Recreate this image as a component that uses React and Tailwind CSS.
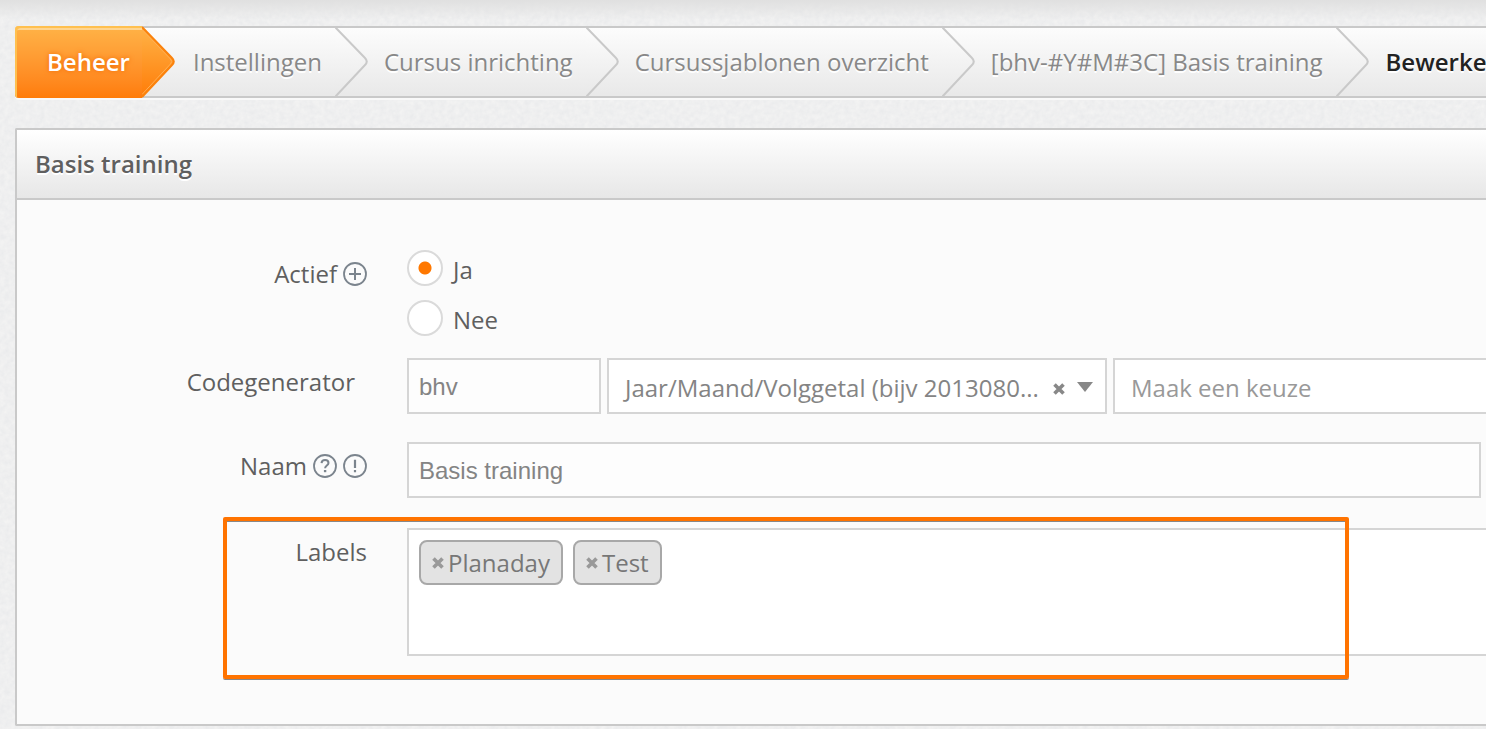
import { useState } from 'react'

const CRUMBS = ['Instellingen', 'Cursus inrichting', 'Cursussjablonen overzicht', '[bhv-#Y#M#3C] Basis training']

const FIELD = 'h-14 border-2 border-[#d5d5d5] text-2xl outline-none'

function Grain() {
  return (
    <svg className="absolute inset-0 -z-10 h-full w-full" aria-hidden="true">
      <filter id="grain" colorInterpolationFilters="sRGB">
        <feTurbulence type="fractalNoise" baseFrequency="0.2" numOctaves="3" />
        <feColorMatrix type="matrix" values="0.05 0 0 0 0.911  0.045 0 0 0 0.915  0.035 0 0 0 0.922  0 0 0 0 1" />
      </filter>
      <rect width="100%" height="100%" filter="url(#grain)" />
    </svg>
  )
}

function Arrow({ active }) {
  const id = active ? 'arrow-active' : 'arrow-plain'
  return (
    <svg className="absolute top-0 left-full" width="34" height="72" viewBox="0 0 34 72" aria-hidden="true">
      <defs>
        <linearGradient id={id} x1="0" y1="0" x2="0" y2="1">
          <stop offset="0" stopColor={active ? '#ffb347' : '#fdfdfd'} />
          <stop offset="1" stopColor={active ? '#ff7c08' : '#e8e8e8'} />
        </linearGradient>
      </defs>
      <path d="M0 1 L30 32 Q33.500 35.500 30 39 L0 71 Z" fill={`url(#${id})`} />
      {active && <path d="M0 3.500 L28.500 33 Q31 35.500 28.500 38 L0 68.500" fill="none" stroke="#ffb055" strokeWidth="1" />}
      <path d="M0 1 L30 32 Q33.500 35.500 30 39 L0 71" fill="none" stroke={active ? '#fb820c' : '#c9c9c9'} strokeWidth="2" />
    </svg>
  )
}

function CircleIcon({ children }) {
  return (
    <svg width="24" height="24" viewBox="0 0 24 24" fill="none" stroke="#7b848d" strokeWidth="2" aria-hidden="true">
      <circle cx="12" cy="12" r="11" strokeWidth="1.800" />
      {children}
    </svg>
  )
}

function Cross() {
  return (
    <svg width="12" height="12" viewBox="0 0 12 12" stroke="currentColor" strokeWidth="3.600" aria-hidden="true">
      <path d="M1.500 1.500 L10.500 10.500 M10.500 1.500 L1.500 10.500" />
    </svg>
  )
}

function Row({ label, htmlFor, icons, className = '', children }) {
  return (
    <div className={`relative flex gap-10 ${className}`}>
      <div className="flex w-[350px] shrink-0 items-center justify-end gap-[6px] self-start pt-2">
        <label htmlFor={htmlFor}>{label}</label>
        {icons}
      </div>
      {children}
    </div>
  )
}

export default function App() {
  const [active, setActive] = useState('Ja')
  const [code, setCode] = useState('bhv')
  const [generator, setGenerator] = useState('ymc')
  const [name, setName] = useState('Basis training')
  const [tags, setTags] = useState(['Planaday', 'Test'])

  return (
    <div className="relative isolate min-h-screen overflow-hidden bg-[#eff0f0] pt-[26px] pl-[15px] font-['Open_Sans',sans-serif] text-2xl leading-8 text-[#5f5f5f]">
      <Grain />
      <div className="absolute inset-x-0 top-0 -z-10 h-5 bg-linear-to-b from-[#e0e0e0] to-transparent" />

      <nav className="rounded-l-sm bg-linear-to-b from-[#fdfdfd] to-[#e8e8e8] shadow-[inset_0_2px_0_#c9c9c9,inset_0_-2px_0_#c9c9c9,0_2px_0_#f9f9f9]">
        <ol className="flex h-[72px] items-stretch whitespace-nowrap text-[#888] [text-shadow:0_2px_0_#fff]">
          <li className="relative mr-[2px] flex items-center rounded-l-sm bg-linear-to-b from-[#ffb347] to-[#ff7c08] pr-3 pl-8 font-semibold text-white shadow-[inset_2px_2px_0_#ffc04f,inset_0_4px_0_#ffd590] [text-shadow:0_0_5px_#f06a00]">
            <a href="#beheer">Beheer</a>
            <Arrow active />
          </li>
          {CRUMBS.map(crumb => (
            <li key={crumb} className="relative flex items-center pr-[13px] pl-[49px]">
              <a href="#crumb">{crumb}</a>
              <Arrow />
            </li>
          ))}
          <li className="flex items-center pl-[50px] font-semibold text-[#222]">Bewerken</li>
        </ol>
      </nav>

      <section className="mt-[30px] rounded-l-xs border-2 border-r-0 border-[#c9c9c9] bg-[#fbfbfb]">
        <h1 className="border-b-2 border-[#c9c9c9] bg-linear-to-b from-white to-[#e7e7e7] py-[18px] pl-[18px] font-semibold [text-shadow:0_2px_0_#fff]">
          Basis training
        </h1>

        <form className="pt-[50px] pb-[68px]" onSubmit={e => e.preventDefault()}>
          <Row
            label="Actief"
            htmlFor="actief-ja"
            icons={<CircleIcon><path d="M12 6v12M6 12h12" /></CircleIcon>}
          >
            <div className="flex flex-col gap-[14px]">
              {['Ja', 'Nee'].map(option => (
                <label key={option} className="flex h-9 gap-[10px]">
                  <input
                    type="radio"
                    id={option === 'Ja' ? 'actief-ja' : 'actief-nee'}
                    name="actief"
                    checked={active === option}
                    onChange={() => setActive(option)}
                    className="size-9 appearance-none rounded-full border-2 border-[#dadada] bg-white checked:bg-[radial-gradient(circle,#ff7800_6px,#fff_7px)]"
                  />
                  <span className="pt-1">{option}</span>
                </label>
              ))}
            </div>
          </Row>

          <Row label={<span className="pr-3">Codegenerator</span>} htmlFor="code" className="mt-[22px]">
            <div className="flex min-w-0 flex-1 gap-[6px]">
              <input
                id="code"
                value={code}
                onChange={e => setCode(e.target.value)}
                className={`${FIELD} w-[194px] bg-[#fdfdfd] px-[10px] pt-[2px] font-['Liberation_Sans',sans-serif] text-[#848484]`}
              />
              <div className="relative w-[500px] shrink-0">
                <select
                  aria-label="Codegenerator formaat"
                  value={generator}
                  onChange={e => setGenerator(e.target.value)}
                  className={`${FIELD} w-full appearance-none bg-white pt-1 pr-14 pl-2 indent-2 text-[#848484]`}
                >
                  <option value="">Maak een keuze</option>
                  <option value="ymc">Jaar/Maand/Volggetal (bijv 2013080...</option>
                </select>
                <button type="button" aria-label="Wissen" onClick={() => setGenerator('')} className="absolute top-[25px] right-[42px] text-[#888]">
                  <Cross />
                </button>
                <svg className="pointer-events-none absolute top-6 right-[14px]" width="16" height="10" viewBox="0 0 16 10" fill="#888" aria-hidden="true">
                  <path d="M0 0h16L8 10z" />
                </svg>
              </div>
              <select
                aria-label="Codegenerator keuze"
                className={`${FIELD} min-w-0 flex-1 appearance-none border-r-0 bg-white pt-1 pl-2 indent-2 text-[#999]`}
              >
                <option>Maak een keuze</option>
              </select>
            </div>
          </Row>

          <Row
            label="Naam"
            htmlFor="naam"
            className="mt-7"
            icons={
              <>
                <CircleIcon>
                  <path d="M8.500 9.200c.2-2 1.600-3.200 3.600-3.200 2 0 3.400 1.200 3.400 2.900 0 2.600-3.400 2.600-3.400 5.300" />
                  <path d="M12.100 16v2.200" strokeWidth="2.400" />
                </CircleIcon>
                <CircleIcon>
                  <path d="M12 5.800v8.200M12 16v2.200" strokeWidth="2.200" />
                </CircleIcon>
              </>
            }
          >
            <input
              id="naam"
              value={name}
              onChange={e => setName(e.target.value)}
              className={`${FIELD} mr-[5px] min-w-0 flex-1 bg-[#fdfdfd] px-[10px] pt-[2px] font-['Liberation_Sans',sans-serif] text-[#848484]`}
            />
          </Row>

          <Row label="Labels" htmlFor="labels" className="mt-[30px]">
            <div className="flex min-h-32 min-w-0 flex-1 flex-wrap content-start gap-[10px] border-2 border-r-0 border-[#d5d5d5] bg-white p-[10px]">
              {tags.map(tag => (
                <span key={tag} className="flex h-[45px] items-center gap-1 rounded-lg border-2 border-[#a8a8a8] bg-[#e3e3e3] px-[11px] text-[#777]">
                  <button
                    type="button"
                    aria-label={`Verwijder ${tag}`}
                    onClick={() => setTags(t => t.filter(x => x !== tag))}
                    className="text-[#999]"
                  >
                    <Cross />
                  </button>
                  {tag}
                </span>
              ))}
              <input id="labels" className="h-11 min-w-0 flex-1 bg-transparent outline-none" />
            </div>
            <div className="pointer-events-none absolute -top-[11px] right-[137px] -bottom-[23px] left-[206px] rounded-xs border-4 border-[#ff7300] shadow-[0_1px_0_#888,inset_0_1px_0_#888]" />
          </Row>
        </form>
      </section>
    </div>
  )
}
